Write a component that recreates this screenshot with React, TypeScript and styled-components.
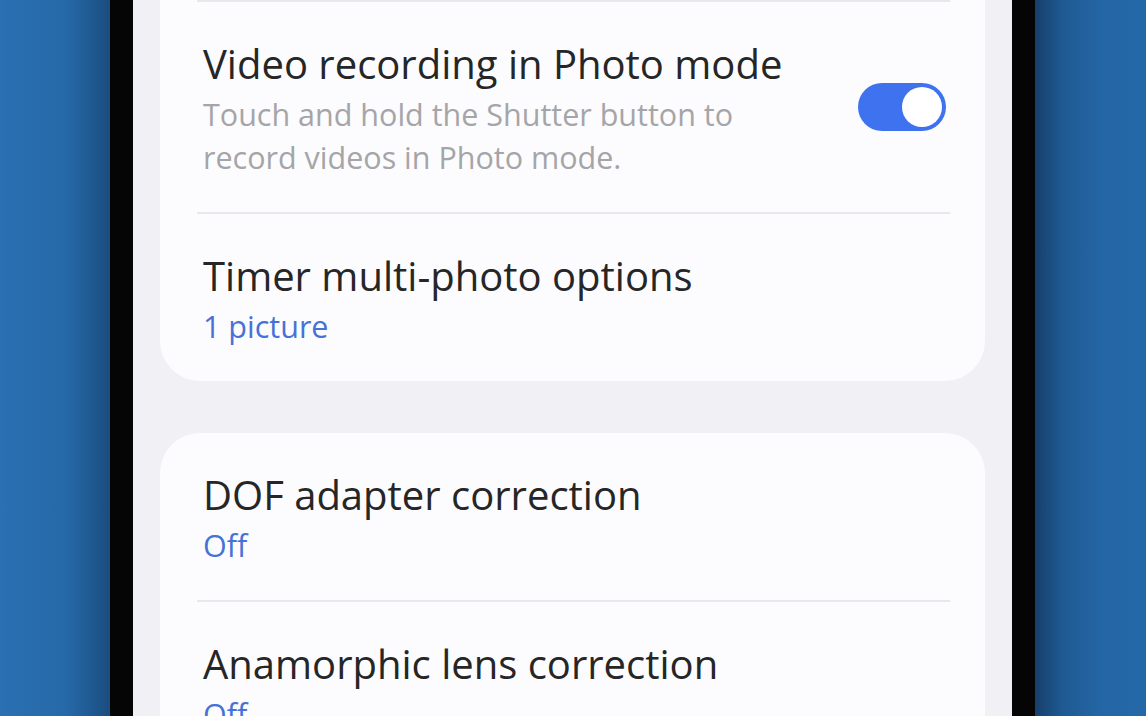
import React from "react";
import styled, { createGlobalStyle } from "styled-components";

const GlobalStyle = createGlobalStyle`
  html, body {
    margin: 0;
    padding: 0;
    overflow: hidden;
  }
  body {
    font-family: "Open Sans", Roboto, sans-serif;
  }
`;

const Page = styled.div`
  width: 1146px;
  height: 716px;
  display: flex;
  overflow: hidden;
`;

const Backdrop = styled.div<{ side: "left" | "right" }>`
  flex: 0 0 ${(p) => (p.side === "left" ? "110px" : "111px")};
  background: ${(p) =>
    p.side === "left"
      ? "linear-gradient(90deg, #2a70b2 0%, #2669a8 60%, #1a4d80 100%)"
      : "linear-gradient(90deg, #173f6a 0%, #1e5a93 25%, #2466a5 60%, #2468a8 100%)"};
`;

const Phone = styled.div`
  flex: 1;
  display: flex;
  border-left: 23px solid #050505;
  border-right: 23px solid #050505;
`;

const Screen = styled.div`
  flex: 1;
  background: #f1f1f5;
  padding: 0 27px;
  display: flex;
  flex-direction: column;
  gap: 52px;
`;

const Card = styled.div<{ clippedTop?: boolean }>`
  background: #fcfcfe;
  border-radius: ${(p) => (p.clippedTop ? "0 0 40px 40px" : "40px")};
  padding: 0 35px 0 37px;
  display: flex;
  flex-direction: column;
`;

const Divider = styled.div`
  height: 2px;
  background: #e8e8ec;
`;

const Row = styled.div`
  display: flex;
  align-items: center;
  padding: 40px 0 33px 6px;
`;

const RowText = styled.div`
  flex: 1;
  display: flex;
  flex-direction: column;
  gap: 7px;
`;

const Title = styled.div`
  font-size: 40px;
  line-height: 44px;
  color: #262626;
`;

const Sub = styled.div<{ accent?: boolean }>`
  font-size: 30.5px;
  line-height: 43px;
  color: ${(p) => (p.accent ? "#4672d8" : "#a5a5a8")};
`;

const Toggle = styled.div<{ on: boolean }>`
  width: 88px;
  height: 48px;
  border-radius: 24px;
  background: ${(p) => (p.on ? "#3f72ef" : "#c9c9cd")};
  display: flex;
  align-items: center;
  justify-content: ${(p) => (p.on ? "flex-end" : "flex-start")};
  padding: 0 4px;
  box-sizing: border-box;
  margin: 0 4px 8px 20px;
`;

const Knob = styled.div`
  width: 40px;
  height: 40px;
  border-radius: 50%;
  background: #ffffff;
`;

type Item = {
  title: string;
  sub: React.ReactNode;
  accent?: boolean;
  toggle?: boolean;
};

const SettingRow = ({ item }: { item: Item }) => (
  <Row>
    <RowText>
      <Title>{item.title}</Title>
      <Sub accent={item.accent}>{item.sub}</Sub>
    </RowText>
    {item.toggle !== undefined && (
      <Toggle on={item.toggle}>
        <Knob />
      </Toggle>
    )}
  </Row>
);

const firstGroup: Item[] = [
  {
    title: "Video recording in Photo mode",
    sub: (
      <>
        Touch and hold the Shutter button to
        <br />
        record videos in Photo mode.
      </>
    ),
    toggle: true,
  },
  { title: "Timer multi-photo options", sub: "1 picture", accent: true },
];

const secondGroup: Item[] = [
  { title: "DOF adapter correction", sub: "Off", accent: true },
  { title: "Anamorphic lens correction", sub: "Off", accent: true },
];

export default function App() {
  return (
    <>
      <GlobalStyle />
      <Page>
        <Backdrop side="left" />
        <Phone>
          <Screen>
            <Card clippedTop>
              <Divider />
              {firstGroup.map((item, i) => (
                <React.Fragment key={item.title}>
                  {i > 0 && <Divider />}
                  <SettingRow item={item} />
                </React.Fragment>
              ))}
            </Card>
            <Card>
              {secondGroup.map((item, i) => (
                <React.Fragment key={item.title}>
                  {i > 0 && <Divider />}
                  <SettingRow item={item} />
                </React.Fragment>
              ))}
            </Card>
          </Screen>
        </Phone>
        <Backdrop side="right" />
      </Page>
    </>
  );
}
